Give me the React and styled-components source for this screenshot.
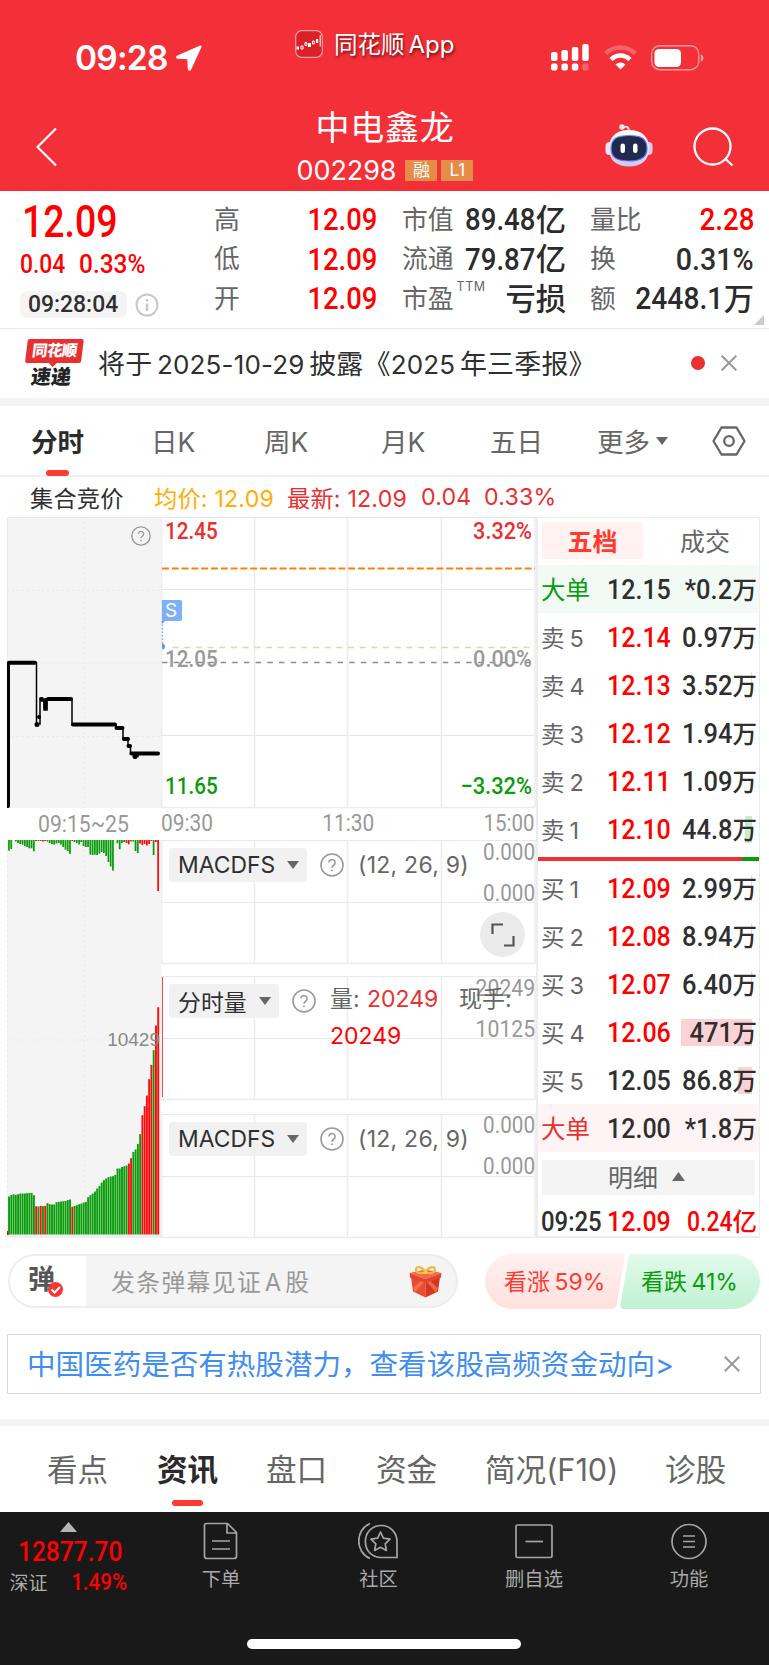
import React from 'react';
import styled, { createGlobalStyle } from 'styled-components';

const GlobalStyle = createGlobalStyle`
  * { box-sizing: border-box; }
  body {
    margin: 0;
    background: #fff;
    color: #2f2f2f;
    font-family: Inter, "Noto Sans CJK SC", sans-serif;
  }
  svg { display: block; flex: none; }
`;

const RED = '#ff0000';
const GREEN = '#0a9c0a';
const SOFT_RED = '#e93030';
const GREY = '#666';
const LINE = '#e9e9e9';

const Screen = styled.div`
  width: 769px;
  height: 1665px;
  display: flex;
  flex-direction: column;
  overflow: hidden;
  white-space: nowrap;
`;

/* Condensed, DIN-like figures */
const Num = styled.span`
  display: inline-block;
  font-family: Roboto, sans-serif;
  font-weight: ${p => p.$weight || 500};
  font-size: ${p => p.$size}px;
  line-height: 1;
  color: ${p => p.$color || 'inherit'};
  transform: scaleX(${p => p.$k || 0.86});
  transform-origin: ${p => p.$from || 'right'} center;
`;

/* ---------- header ---------- */
const Header = styled.header`
  height: 191px;
  background: #f33038;
  color: #fff;
  flex: none;
`;
const StatusBar = styled.div`
  height: 96px;
  display: grid;
  grid-template-columns: 295px 256px 1fr;
`;
const Clock = styled.div`
  display: flex;
  align-items: center;
  height: 115px;
  gap: 8px;
  padding-left: 75px;
  font-size: 33.5px;
  font-weight: 600;
  letter-spacing: -0.8px;
`;
const AppBadge = styled.div`
  display: flex;
  align-items: center;
  height: 88px;
  gap: 11px;
  font-size: 23.5px;
  text-shadow: 1px 2px 3px rgba(70, 0, 0, 0.75);
  div { padding-bottom: 2px; }
  span { margin-left: 4px; font-size: 24px; }
`;
const StatusIcons = styled.div`
  display: flex;
  align-items: center;
  height: 115px;
  gap: 14px;
`;
const TitleBar = styled.div`
  height: 95px;
  display: grid;
  grid-template-columns: 36px 249px 200px 120px 88px 1fr;
  align-items: start;
`;
const IconSlot = styled.div`
  padding-top: ${p => p.$top}px;
`;
const StockTitle = styled.div`
  display: flex;
  flex-direction: column;
  align-items: center;
`;
const StockName = styled.h1`
  margin: 8px 0 0;
  font-size: 34px;
  font-weight: 400;
  line-height: 48px;
  letter-spacing: 0.8px;
`;
const StockCode = styled.div`
  display: flex;
  align-items: center;
  height: 36px;
  font-size: 27px;
  letter-spacing: -0.1px;
  gap: 4px;
  > span:first-child { margin-right: 5px; }
`;
const Mark = styled.span`
  width: 32px;
  height: 21px;
  background: #e58d48;
  font-size: 17px;
  line-height: 21px;
  text-align: center;
  letter-spacing: 0;
`;

/* ---------- quote ---------- */
const Quote = styled.section`
  position: relative;
  height: 138px;
  flex: none;
  display: grid;
  grid-template-columns: 194px 188px 188px 163px;
  padding: 9px 0 0 20px;
  border-bottom: 1px solid ${LINE};
`;
const Corner = styled.svg`
  position: absolute;
  right: 5px;
  bottom: 3px;
`;
const Price = styled.div`
  display: flex;
  flex-direction: column;
`;
const PriceBig = styled.div`
  height: 41px;
  padding: 1px 0 0 2px;
`;
const PriceChange = styled.div`
  height: 38px;
  display: grid;
  grid-template-columns: 59px auto;
  align-items: center;
  padding-top: 7px;
`;
const PriceTime = styled.div`
  display: flex;
  align-items: center;
  gap: 8px;
  height: 27px;
  margin-top: 12px;
`;
const TimePill = styled.div`
  width: 107px;
  height: 27px;
  border-radius: 7px;
  background: #f4f4f4;
  padding: 1px 0 0 8px;
`;
const Stats = styled.div`
  width: ${p => p.$w || 164}px;
`;
const Stat = styled.div`
  height: 39.6px;
  display: flex;
  align-items: center;
  justify-content: space-between;
`;
const StatLabel = styled.span`
  color: ${GREY};
  font-size: 25.8px;
  line-height: 38px;
  sup {
    font-size: 12.5px;
    vertical-align: top;
    position: relative;
    top: -12px;
    left: 3px;
    letter-spacing: 0.5px;
  }
`;
const StatValue = styled.span`
  display: flex;
  align-items: center;
  color: #2b2b2b;
  font-size: 30.3px;
  font-weight: 500;
  line-height: 38px;
`;

/* ---------- news ---------- */
const News = styled.section`
  height: 69px;
  flex: none;
  display: flex;
  align-items: center;
  padding: 0 32px 2px 24px;
`;
const NewsLogo = styled.div`
  width: 58px;
  height: 47px;
  transform: skewX(-7deg);
  text-align: center;
  font-weight: 900;
`;
const NewsLogoTop = styled.div`
  position: relative;
  height: 24px;
  margin: 0 1px;
  border-radius: 2px;
  background: #e93030;
  color: #fff;
  font-size: 15.5px;
  line-height: 23px;
  letter-spacing: -0.7px;
  &::after {
    content: '';
    position: absolute;
    left: 24px;
    top: 24px;
    border: 4px solid transparent;
    border-top-color: #e93030;
    border-bottom-width: 0;
  }
`;
const NewsLogoBottom = styled.div`
  color: #222;
  font-size: 20px;
  line-height: 28px;
`;
const NewsText = styled.div`
  margin-left: 16px;
  flex: 1;
  font-size: 27px;
  letter-spacing: 0.15px;
  word-spacing: -3px;
`;
const Latin = styled.span`
  font-size: 26px;
`;
const Dot = styled.i`
  width: 14px;
  height: 14px;
  border-radius: 50%;
  background: #e93030;
  margin-right: 16px;
`;
const Gap = styled.div`
  height: ${p => p.$h}px;
  flex: none;
  background: #f3f3f3;
`;

/* ---------- period tabs ---------- */
const Periods = styled.nav`
  height: 71px;
  flex: none;
  display: grid;
  grid-template-columns: 120px 113px 117px 109px 107px 115px 1fr;
  padding-left: 31px;
  border-bottom: 2px solid #f0f0f0;
  font-size: 26.5px;
`;
const Period = styled.div`
  position: relative;
  display: flex;
  align-items: center;
  gap: 6px;
  font-weight: ${p => (p.$on ? 600 : 400)};
  color: ${p => (p.$on ? '#2b2b2b' : GREY)};
  &::after {
    content: '';
    display: ${p => (p.$on ? 'block' : 'none')};
    position: absolute;
    left: 15px;
    bottom: -1px;
    width: 23px;
    height: 6px;
    border-radius: 3px;
    background: #ff3b30;
  }
`;
const Summary = styled.div`
  height: 40px;
  flex: none;
  display: grid;
  grid-template-columns: 124px 133px 134px 63px auto;
  align-items: center;
  padding: 0 0 1px 30px;
  font-size: 23.2px;
`;
const SummaryItem = styled.span`
  color: ${p => p.$color};
  letter-spacing: 0.2px;
`;

/* ---------- board ---------- */
const Board = styled.section`
  height: 721px;
  flex: none;
  display: grid;
  grid-template-columns: 154px 375px 224px;
  padding-left: 7px;
`;
const Auction = styled.div`
  display: flex;
  flex-direction: column;
  position: relative;
`;
const AuctionLabel = styled.div`
  height: 32px;
  padding: 5px 0 0 31px;
  color: #999;
`;
const HelpSpot = styled.div`
  position: absolute;
  left: 124px;
  top: 9px;
`;
const AuctionVolume = styled.div`
  position: absolute;
  right: 1px;
  top: 513px;
  font: 19px/20px "Liberation Sans", sans-serif;
  color: #888;
`;
const Charts = styled.div`
  display: flex;
  flex-direction: column;
`;
const Plot = styled.div`
  position: relative;
  height: ${p => p.$h}px;
`;
const TimeAxis = styled.div`
  height: ${p => p.$h}px;
  display: flex;
  justify-content: space-between;
  padding: 3px 1px 0 0;
  color: #999;
`;
const Tag = styled.div`
  position: absolute;
  top: ${p => p.$top}px;
  ${p => (p.$left !== undefined ? `left: ${p.$left}px;` : `right: ${p.$right}px;`)}
  color: ${p => p.$color || '#999'};
  line-height: 1;
`;
const Flag = styled.div`
  position: absolute;
  left: 1px;
  top: 83px;
  width: 20px;
  height: 21px;
  border-radius: 0 2px 2px 0;
  background: #7db0f5;
  color: #fff;
  font-size: 19px;
  line-height: 22px;
  text-align: center;
  padding-right: 2px;
`;
const Indicator = styled.div`
  position: absolute;
  top: 8px;
  left: 8px;
  display: flex;
  align-items: flex-start;
`;
const Picker = styled.button`
  width: ${p => p.$w}px;
  height: 34px;
  border: 0;
  border-radius: 4px;
  background: rgba(240, 240, 240, 0.94);
  padding: 0 8px 1px 9px;
  display: flex;
  align-items: center;
  justify-content: space-between;
  font: 400 22.9px Inter, "Noto Sans CJK SC", sans-serif;
  color: #2f2f2f;
  margin-right: 13px;
`;
const Params = styled.div`
  margin-left: 14px;
  font-size: 23px;
  line-height: 34px;
  letter-spacing: 0.25px;
  color: ${GREY};
`;
const Readout = styled.div`
  display: grid;
  grid-template-columns: 37px 92px auto;
  margin: -3px 0 0 14px;
  font-size: 23px;
  line-height: 36.5px;
  color: ${GREY};
  b { font-weight: 400; color: ${SOFT_RED}; }
  em { font-style: normal; color: ${RED}; grid-column: 1 / -1; }
`;
const HelpWrap = styled.div`
  padding-top: 5px;
`;
const Expand = styled.div`
  position: absolute;
  right: 11px;
  top: 72px;
  width: 45px;
  height: 45px;
  border-radius: 50%;
  background: #ebebeb;
  display: flex;
  align-items: center;
  justify-content: center;
`;

/* ---------- order book ---------- */
const Book = styled.aside`
  height: 721px;
  border: solid #ededed;
  border-width: 1px 1px 2px 2px;
  display: flex;
  flex-direction: column;
`;
const BookTabs = styled.div`
  height: 47px;
  flex: none;
  display: grid;
  grid-template-columns: 101px 1fr;
  padding: 4px 0 6px 4px;
  font-size: 25px;
`;
const BookTab = styled.div`
  display: flex;
  align-items: center;
  justify-content: center;
  padding: 0 0 2px ${p => (p.$on ? 0 : 8)}px;
  height: 37px;
  border-radius: 4px;
  background: ${p => (p.$on ? '#fff2f1' : 'transparent')};
  color: ${p => (p.$on ? '#ff3b30' : GREY)};
  font-weight: ${p => (p.$on ? 700 : 400)};
`;
const Level = styled.div`
  position: relative;
  height: ${p => p.$h || 48}px;
  margin-top: ${p => p.$mt || 0}px;
  flex: none;
  display: grid;
  grid-template-columns: 66px 71px 1fr;
  align-items: center;
  padding: 1px 2px 0 3px;
  background: ${p => p.$bg || 'transparent'};
`;
const LevelName = styled.span`
  color: ${p => p.$color || GREY};
  font-size: ${p => (p.$big ? 24.5 : 23.5)}px;
  padding-bottom: 2px;
  word-spacing: -1.5px;
`;
const Amount = styled.span`
  position: relative;
  display: flex;
  align-items: center;
  justify-content: flex-end;
  color: ${p => p.$color || '#2f2f2f'};
  font-size: 24.5px;
  font-weight: 500;
  line-height: ${p => p.$lh || 34}px;
`;
const DepthBar = styled.i`
  position: absolute;
  right: 7px;
  top: 11px;
  width: ${p => p.$w}px;
  height: 27px;
  background: ${p => p.$color};
`;
const Ratio = styled.div`
  height: 11px;
  flex: none;
  padding-top: 4px;
  &::after {
    content: '';
    display: block;
    height: 4px;
    background: linear-gradient(90deg, #f03038 204px, ${GREEN} 204px);
  }
`;
const Details = styled.div`
  height: 35px;
  margin: 8px 4px 4px 4px;
  padding: 0 4px 3px 0;
  flex: none;
  background: #f4f4f4;
  display: flex;
  align-items: center;
  justify-content: center;
  gap: 14px;
  font-size: 25px;
  color: ${GREY};
`;

/* ---------- comments and votes ---------- */
const Social = styled.section`
  height: 55px;
  margin-top: 16px;
  flex: none;
  display: flex;
  padding-left: 8px;
`;
const Danmu = styled.div`
  width: 450px;
  height: 54px;
  border: 2px solid #ededed;
  border-radius: 27px;
  background: #f4f4f4;
  display: flex;
  align-items: center;
  overflow: hidden;
  margin-right: 27px;
  padding-right: 14px;
  color: #999;
  font-size: 23.8px;
  letter-spacing: 1.4px;
`;
const DanmuToggle = styled.div`
  position: relative;
  width: 76px;
  height: 50px;
  background: #fff;
  padding: 0 0 0 18px;
  font-size: 27px;
  font-weight: 700;
  line-height: 48px;
  color: #555;
  svg { position: absolute; left: 38px; top: 26px; }
`;
const DanmuText = styled.span`
  flex: 1;
  padding: 0 0 1px 25px;
  word-spacing: -5.5px;
`;
const VoteText = styled.span`
  position: relative;
  top: -2px;
  word-spacing: -2px;
`;
const Vote = styled.div`
  position: relative;
  width: 140px;
  height: 55px;
  margin-left: ${p => p.$ml || 0}px;
  display: flex;
  align-items: center;
  padding-left: ${p => p.$pl}px;
  color: ${p => p.$color};
  font-size: 23px;
  > svg { position: absolute; inset: 0; }
`;
const Promo = styled.section`
  height: 60px;
  margin: 25px 8px 25px 7px;
  border: 1.5px solid #d8d8d8;
  flex: none;
  display: flex;
  align-items: center;
  justify-content: space-between;
  padding: 0 20px 0 19px;
  font-size: 28.55px;
  color: #3f8ef0;
  span { padding-bottom: 4px; }
`;
const Sections = styled.nav`
  height: 86px;
  flex: none;
  display: grid;
  grid-template-columns: 110px 109px 110px 109px 180px auto;
  padding-left: 47px;
`;
const SectionTab = styled.div`
  position: relative;
  font-size: 30.6px;
  line-height: 88px;
  height: 86px;
  color: ${p => (p.$on ? '#2b2b2b' : GREY)};
  font-weight: ${p => (p.$on ? 600 : 400)};
  &::after {
    content: '';
    display: ${p => (p.$on ? 'block' : 'none')};
    position: absolute;
    left: 15px;
    bottom: 6px;
    width: 31px;
    height: 6px;
    border-radius: 3px;
    background: #ff3b30;
  }
`;

/* ---------- bottom bar ---------- */
const Bottom = styled.footer`
  height: 153px;
  flex: none;
  background: #191919;
  color: #aaa;
`;
const BottomRow = styled.div`
  height: 127px;
  display: grid;
  grid-template-columns: 142px 158px 157px 154px 156px;
`;
const Index = styled.div`
  display: flex;
  flex-direction: column;
  align-items: center;
  padding: 10px 0 0;
  width: 137px;
`;
const IndexValue = styled.div`
  width: 118px;
  height: 30px;
  margin-top: 6px;
  padding-left: 8px;
`;
const IndexLine = styled.div`
  display: flex;
  align-items: center;
  justify-content: space-between;
  width: 118px;
  height: 27px;
  font-size: 19px;
`;
const Action = styled.div`
  display: flex;
  flex-direction: column;
  align-items: center;
  padding-top: 10px;
  font-size: 19.3px;
  line-height: 28px;
  svg { margin-bottom: 5px; }
`;
const HomeBar = styled.div`
  width: 274px;
  height: 10px;
  border-radius: 5px;
  background: #fff;
  margin-left: 247px;
`;

const Help = ({ size = 24 }) => (
  <svg width={size} height={size} viewBox="0 0 24 24" fill="none" stroke="#999" strokeWidth="1.6">
    <circle cx="12" cy="12" r="11" />
    <path d="M8.9 9.6a3.1 3.1 0 1 1 4.8 2.6c-1.1.8-1.7 1.2-1.7 2.6" />
    <circle cx="12" cy="17.3" r=".6" fill="#999" strokeWidth=".8" />
  </svg>
);
const Tri = ({ w = 12, h = 8, up, color = '#666' }) => (
  <svg width={w} height={h}>
    <path d={up ? `M0 ${h}H${w}L${w / 2} 0Z` : `M0 0H${w}L${w / 2} ${h}Z`} fill={color} />
  </svg>
);
const Cross = () => (
  <svg width="16" height="16" stroke="#999" strokeWidth="2">
    <path d="M.7.7l14.6 14.6M15.3.7L.7 15.3" />
  </svg>
);

const G = 'g';
const R = 'r';
/* each bar is [height, colour] */
const V = (list, color) => list.map(h => [h, color]);
const matched = [
  ...V([38, 39.5, 40.3, 39.7, 40.3, 41, 41, 41, 41.3, 41.6, 41.6, 39.3], G),
  [28.3, R], [28, G], [28.6, R], [28.3, G], [28.6, R],
  ...V([31.3, 30.3, 30, 30, 32.3, 32.6, 33, 33.3, 33.6, 34.5, 35], G),
  [27.7, R],
  ...V([28.6, 29.3, 30.3, 31, 32, 32.6, 37.3, 39.3, 41, 43, 46, 48.6, 52, 54.3, 56, 57.3, 58, 58.3, 59.6, 66, 66, 67.6, 68.3, 69], G),
  [71, R], [76.3, R],
  ...V([82.6, 85, 90.6, 100.3], G),
  ...V([119.3, 128.3, 139, 155.3, 169.6], R),
  [184.3, G], [209, R], [227.3, R],
];
const unmatched = [
  ...V([10.6, 9, 0, 1.5, 3, 4, 4.6, 6, 7, 8.3, 8.3, 11.3], G),
  [1, R], [1, G], [1, R], [1.5, R], [1, R],
  ...V([1.5, 3, 4, 4.5, 3.5, 3, 4.5, 7, 9.6, 11, 14], G),
  [1, R],
  ...V([2, 3, 4.5, 2, 6, 7, 7, 14.6, 15, 14.6, 15, 13.6, 12, 13, 16, 22, 26.5, 30.6, 0, 3.3, 9.3, 3, 2], G),
  [3, R], [4.3, R],
  ...V([1.5, 1.5, 11, 13], G),
  ...V([3.5, 5, 4, 5.5, 4, 1], R),
  [15, G], [2, R], [51, R],
];
const barFill = c => (c === R ? '#ff0a0a' : '#0a9c0a');
const PITCH = 2.26;

const AuctionPrice = () => (
  <svg width="154" height="291" fill="none">
    <rect width="154" height="291" fill="#f4f4f4" />
    <path d="M.5 291V.5H154" stroke="#e9e9e9" />
    <path d="M77.5 0V291M0 73.5H154M0 219.5H154" stroke="#e9e9e9" strokeDasharray="2 3" />
    <path d="M0 146H154" stroke="#ededed" />
    <path d="M1.300 290V146H29.500V207H33V184H37V193H40V182H65V208H109V211H116V222H121V229H123.500V237H128V239.500H131V237H151" stroke="#000" strokeWidth="1.500" />
    <path d="M1 289V146.500M2 145.800H28M34 182H35M41 182H64M38.500 183V191M66 207.500H108M109.500 211H115.500M117 222H121M121.500 229H123M124.500 236.500H151" stroke="#000" strokeWidth="4" strokeLinecap="round" />
    <circle cx="30" cy="207.500" r="2.500" fill="#000" />
    <circle cx="32" cy="200" r="2" fill="#000" />
    <circle cx="128" cy="239.500" r="2.500" fill="#000" />
  </svg>
);

const AuctionBars = () => (
  <svg width="154" height="398">
    <rect width="154" height="398" fill="#f4f4f4" />
    <path d="M.5 0V398M77.500 0V398" stroke="#e9e9e9" strokeDasharray="2 3" />
    <path d="M0 200H154" stroke="#e9e9e9" strokeDasharray="2 3" />
    <path d="M0 396.500H154" stroke="#e9e9e9" strokeWidth="1.500" />
    <rect x="0" y="391" width="1.500" height="4" fill="#f00" />
    {unmatched.map(([h, c], i) => (
      <rect key={i} x={1.1 + i * PITCH} y="0" width="1.750" height={h} fill={barFill(c)} />
    ))}
    {matched.map(([h, c], i) => (
      <rect key={i} x={1.1 + i * PITCH} y={394.5 - h} width="1.900" height={h} fill={barFill(c)} />
    ))}
  </svg>
);

const PriceGrid = () => (
  <svg width="375" height="292" fill="none">
    <path d="M0 .5H374M0 72.500H374M0 218.500H374" stroke="#e7e7e7" />
    <path d="M.5 0V290M93.500 0V290M186.500 0V290M280.500 0V290M374 0V290M0 290.500H374" stroke="#ececec" strokeWidth="1.500" />
    <path d="M1 51.500H374" stroke="#ff8010" strokeWidth="2" strokeDasharray="7 2.800" />
    <path d="M11.500 130.500H370" stroke="#e8d2ae" strokeWidth="1.500" strokeDasharray="6 5.700" />
    <path d="M1 145.500H372" stroke="#8d8d8d" strokeWidth="1.300" strokeDasharray="5.500 6.200" />
    <path d="M1.500 104V128" stroke="#7db0f5" strokeWidth="1.500" strokeDasharray="1.500 2" />
    <path d="M1 104h3l-3 3zM1 126.500a3 3 0 0 1 0 6z" fill="#5a9bee" />
  </svg>
);

const SubGrid = () => (
  <svg width="375" height="125" fill="none">
    <path d="M0 .5H374M0 62.500H374" stroke="#e9e9e9" />
    <path d="M.5 0V124M93.500 0V124M186.500 0V124M280.500 0V124M374 0V124M0 123.500H374" stroke="#ececec" strokeWidth="1.500" />
  </svg>
);

const Robot = () => (
  <svg width="48" height="44" viewBox="0 0 48 44">
    <defs>
      <linearGradient id="shell" x1="0" y1="0" x2="0" y2="1">
        <stop offset="0" stopColor="#fff" />
        <stop offset=".6" stopColor="#e4e2fa" />
        <stop offset="1" stopColor="#c9c6ee" />
      </linearGradient>
      <linearGradient id="rim" x1="0" y1="0" x2="1" y2="1">
        <stop offset="0" stopColor="#4fb5ea" />
        <stop offset=".5" stopColor="#9a63ee" />
        <stop offset="1" stopColor="#3e7af0" />
      </linearGradient>
    </defs>
    <path d="M18 3.500c4-2 6-.5 6 4" fill="none" stroke="#f0e3ee" strokeWidth="2" />
    <circle cx="17" cy="3" r="2.700" fill="#efe6f5" />
    <rect x=".5" y="18" width="8" height="13" rx="4" fill="#e6e4f8" />
    <rect x="39.500" y="18" width="8" height="13" rx="4" fill="#d2d0f0" />
    <path d="M24 6c13 0 20 7 20 18 0 12-7 18.500-20 18.500S4 36 4 24C4 13 11 6 24 6z" fill="url(#shell)" />
    <path d="M24 11.500c12 0 18 3 18 13 0 9-6 12.500-18 12.500S6 33.500 6 24.500c0-10 6-13 18-13z" fill="#1f2a4e" stroke="url(#rim)" strokeWidth="1.200" />
    <rect x="15.500" y="19.500" width="4.500" height="9.500" rx="2.200" fill="#fff" />
    <rect x="28" y="19.500" width="4.500" height="9.500" rx="2.200" fill="#fff" />
  </svg>
);

const Gift = () => (
  <svg width="33" height="34" viewBox="0 0 33 34">
    <path d="M2 13l14.500 3v17.500L4 27.500z" fill="#ea4a2e" />
    <path d="M31 13l-14.500 3v17.500L29 27.500z" fill="#d8351f" />
    <path d="M.5 9l16-3.500L32.500 9l-16 6z" fill="#f0694a" />
    <path d="M.5 9l16 6v4L1.200 13.800zM32.500 9l-16 6v4l15.300-5.200z" fill="#e8442b" />
    <path d="M4 24l8-7 3 1.200L6 28.500zM29 24l-8-7-3 1.200 9 10.300z" fill="#f58a64" opacity=".6" />
    <path d="M16.500 8.500C12 10 7 9 7 5.500S13 1.500 16.500 8.500zM16.500 8.500C21 10 26 9 26 5.500S20 1.500 16.500 8.500z" fill="none" stroke="#f5b63c" strokeWidth="2.200" />
    <circle cx="16.500" cy="8" r="2" fill="#f9cd57" />
  </svg>
);

const levels = [
  { n: '大单', p: '12.15', a: '*0.2', c: '#2f2f2f', nc: GREEN, bg: '#f2faf6' },
  { n: '卖 5', p: '12.14', a: '0.97' },
  { n: '卖 4', p: '12.13', a: '3.52', bar: 1, bc: '#c9ecc9' },
  { n: '卖 3', p: '12.12', a: '1.94' },
  { n: '卖 2', p: '12.11', a: '1.09' },
  { n: '卖 1', p: '12.10', a: '44.8', bar: 7, bc: '#c9ecc9' },
  null,
  { n: '买 1', p: '12.09', a: '2.99', bar: 1, bc: '#fbd3d6' },
  { n: '买 2', p: '12.08', a: '8.94', bar: 1, bc: '#fbd3d6' },
  { n: '买 3', p: '12.07', a: '6.40', bar: 1, bc: '#fbd3d6' },
  { n: '买 4', p: '12.06', a: '471', bar: 71, bc: '#fbd3d6' },
  { n: '买 5', p: '12.05', a: '86.8', c: '#2f2f2f', bar: 14, bc: '#fbd3d6' },
  { n: '大单', p: '12.00', a: '*1.8', c: '#2f2f2f', nc: SOFT_RED, bg: '#fff4f5' },
];

const Macd = ({ expand }) => (
  <Plot $h={expand ? 136 : 125}>
    <SubGrid />
    <Tag $top={expand ? 1 : 0} $right={1}><Num $size={23.5} $weight={400} $k={0.88}>0.000</Num></Tag>
    <Tag $top={expand ? 42 : 41} $right={1}><Num $size={23.5} $weight={400} $k={0.88}>0.000</Num></Tag>
    <Indicator>
      <Picker $w={138}>MACDFS<Tri /></Picker>
      <HelpWrap><Help /></HelpWrap>
      <Params>(12, 26, 9)</Params>
    </Indicator>
    {expand && (
      <Expand>
        <svg width="24" height="24" fill="none" stroke="#555" strokeWidth="2.200">
          <path d="M1.500 11V1.500H12M13 22.500H22.500V13" />
        </svg>
      </Expand>
    )}
  </Plot>
);

const signal = [[9, 1], [11, 1], [14, 1], [17, 0.25]];

export default function App() {
  return (
    <Screen>
      <GlobalStyle />
      <Header>
        <StatusBar>
          <Clock>
            09:28
            <svg width="26" height="26" viewBox="0 0 26 26">
              <path d="M23.500.7L1.500 10.500c-2 1-1.600 3.200.5 3.300l9.300.4.500 9.600c.1 2.200 2.500 2.700 3.400.7L25.300 2.500C25.900 1 25 .1 23.500.7z" fill="#fff" />
            </svg>
          </Clock>
          <AppBadge>
            <svg width="28" height="28" viewBox="0 0 28 28" fill="none">
              <rect x=".7" y=".7" width="26.600" height="26.600" rx="6" fill="#dc2028" stroke="#f6a0a3" strokeWidth="1.200" />
              <path d="M1.500 16.500h2.500v3H1.500zM13 13h3v4h-3zM21 9h2.200v4H21z" fill="#fff" />
              <path d="M6 16h2v3H6zM10 12.500h1.800v3H10zM17.500 11h1.800v3h-1.800zM25.200 5v11.500" stroke="#fff" />
            </svg>
            <div>同花顺<span>App</span></div>
          </AppBadge>
          <StatusIcons>
            <svg width="39" height="27" fill="#fff">
              {signal.map(([h, o], i) => (
                <g key={i}>
                  <rect x={i * 10.400} y={17 - h} width="6.500" height={h} rx="2" />
                  <rect x={i * 10.400} y="19.500" width="6.500" height="7" rx="2" opacity={o} />
                </g>
              ))}
            </svg>
            <svg width="33" height="25" viewBox="0 0 33 25" fill="none" stroke="#fff" strokeWidth="4.500">
              <path d="M1.700 8.500c8-8 21.600-8 29.600 0" opacity=".25" />
              <path d="M7 14.500c5.500-5.300 13.500-5.300 19 0" />
              <path d="M16.500 24.500l-5-5c3-2.700 7-2.700 10 0z" fill="#fff" stroke="none" />
            </svg>
            <svg width="54" height="26" viewBox="0 0 54 26" fill="none">
              <rect x=".7" y=".7" width="47" height="24" rx="8" stroke="#fff" strokeWidth="1.400" opacity=".5" />
              <rect x="3.500" y="4" width="26.500" height="18" rx="4.500" fill="#fff" />
              <path d="M49.800 9v8c3.500-1.500 3.500-6.500 0-8z" fill="#fff" opacity=".5" />
            </svg>
          </StatusIcons>
        </StatusBar>
        <TitleBar>
          <span />
          <IconSlot $top={31}>
            <svg width="22" height="40" fill="none" stroke="#fff" strokeWidth="2.200">
              <path d="M20 1.500L1.500 20 20 38.500" />
            </svg>
          </IconSlot>
          <StockTitle>
            <StockName>中电鑫龙</StockName>
            <StockCode><span>002298</span><Mark>融</Mark><Mark>L1</Mark></StockCode>
          </StockTitle>
          <span />
          <IconSlot $top={28}><Robot /></IconSlot>
          <IconSlot $top={31}>
            <svg width="42" height="42" fill="none" stroke="#fff" strokeWidth="2.300">
              <circle cx="19.500" cy="19.500" r="18" />
              <path d="M32 31.500l7.500 7" />
            </svg>
          </IconSlot>
        </TitleBar>
      </Header>

      <Quote>
        <Price>
          <PriceBig><Num $size={43.5} $color={RED} $from="left">12.09</Num></PriceBig>
          <PriceChange>
            <Num $size={26} $color={RED} $from="left" $k={0.88}>0.04</Num>
            <Num $size={26} $color={RED} $from="left" $k={0.94}>0.33%</Num>
          </PriceChange>
          <PriceTime>
            <TimePill><Num $size={24.5} $from="left" $k={0.935}>09:28:04</Num></TimePill>
            <svg width="24" height="24" fill="none" stroke="#c8c8c8" strokeWidth="2">
              <circle cx="12" cy="12" r="10.500" />
              <path d="M12 10.500V18M12 6v2.500" strokeWidth="2.500" />
            </svg>
          </PriceTime>
        </Price>
        <Stats $w={163}>
          {['高', '低', '开'].map(l => (
            <Stat key={l}><StatLabel>{l}</StatLabel><Num $size={31.5} $k={0.87} $color={RED}>12.09</Num></Stat>
          ))}
        </Stats>
        <Stats>
          <Stat><StatLabel>市值</StatLabel><StatValue><Num $size={31.5} $k={0.875}>89.48</Num>亿</StatValue></Stat>
          <Stat><StatLabel>流通</StatLabel><StatValue><Num $size={31.5} $k={0.875}>79.87</Num>亿</StatValue></Stat>
          <Stat><StatLabel>市盈<sup>TTM</sup></StatLabel><StatValue>亏损</StatValue></Stat>
        </Stats>
        <Stats>
          <Stat><StatLabel>量比</StatLabel><Num $size={31.5} $k={0.88} $color={RED}>2.28</Num></Stat>
          <Stat><StatLabel>换</StatLabel><Num $size={31.5} $k={0.91}>0.31%</Num></Stat>
          <Stat><StatLabel>额</StatLabel><StatValue><Num $size={31.5} $k={0.895}>2448.1</Num>万</StatValue></Stat>
        </Stats>
        <Corner width="10" height="10"><path d="M10 0V10H0Z" fill="#ccc" /></Corner>
      </Quote>

      <News>
        <NewsLogo>
          <NewsLogoTop>同花顺</NewsLogoTop>
          <NewsLogoBottom>速递</NewsLogoBottom>
        </NewsLogo>
        <NewsText>将于 <Latin>2025-10-29</Latin> 披露《<Latin>2025</Latin> 年三季报》</NewsText>
        <Dot />
        <Cross />
      </News>
      <Gap $h={8} />

      <Periods>
        <Period $on>分时</Period>
        <Period>日K</Period>
        <Period>周K</Period>
        <Period>月K</Period>
        <Period>五日</Period>
        <Period>更多<Tri /></Period>
        <Period>
          <svg width="34" height="30" fill="none" stroke="#666" strokeWidth="2.300">
            <path d="M9.500 1.500h15L32.500 15l-8 13.500h-15L1.500 15z" strokeLinejoin="round" />
            <circle cx="17" cy="15" r="4.800" />
          </svg>
        </Period>
      </Periods>
      <Summary>
        <SummaryItem>集合竞价</SummaryItem>
        <SummaryItem $color="#ffae00">均价: 12.09</SummaryItem>
        <SummaryItem $color={SOFT_RED}>最新: 12.09</SummaryItem>
        <SummaryItem $color={SOFT_RED}>0.04</SummaryItem>
        <SummaryItem $color={SOFT_RED}>0.33%</SummaryItem>
      </Summary>

      <Board>
        <Auction>
          <AuctionPrice />
          <HelpSpot><Help size={20} /></HelpSpot>
          <AuctionLabel><Num $size={23.5} $weight={400} $k={0.9} $from="left">09:15~25</Num></AuctionLabel>
          <AuctionBars />
          <AuctionVolume>10429</AuctionVolume>
        </Auction>

        <Charts>
          <Plot $h={292}>
            <PriceGrid />
            <Flag>S</Flag>
            <Tag $top={3} $left={4} $color={SOFT_RED}><Num $size={23.5} $from="left" $k={0.88}>12.45</Num></Tag>
            <Tag $top={3} $right={4} $color={SOFT_RED}><Num $size={23.5} $k={0.92}>3.32%</Num></Tag>
            <Tag $top={131} $left={4}><Num $size={23.5} $from="left" $k={0.88}>12.05</Num></Tag>
            <Tag $top={131} $right={4}><Num $size={23.5} $k={0.92}>0.00%</Num></Tag>
            <Tag $top={258} $left={4} $color={GREEN}><Num $size={23.5} $from="left" $k={0.88}>11.65</Num></Tag>
            <Tag $top={258} $right={4} $color={GREEN}><Num $size={23.5} $k={0.93}>−3.32%</Num></Tag>
          </Plot>
          <TimeAxis $h={31}>
            <Num $size={23.5} $weight={400} $k={0.89} $from="left">09:30</Num>
            <Num $size={23.5} $weight={400} $k={0.89} $from="center">11:30</Num>
            <Num $size={23.5} $weight={400} $k={0.87}>15:00</Num>
          </TimeAxis>
          <Macd expand />
          <Plot $h={138}>
            <SubGrid />
            <Tag $top={1} $right={1}><Num $size={23.5} $weight={400} $k={0.9}>20249</Num></Tag>
            <Tag $top={42} $right={1}><Num $size={23.5} $weight={400} $k={0.9}>10125</Num></Tag>
            <Tag $top={1} $left={1}><svg width="1" height="120"><rect width="1" height="120" fill="#f05050" /></svg></Tag>
            <Indicator>
              <Picker $w={110}>分时量<Tri /></Picker>
              <HelpWrap><Help /></HelpWrap>
              <Readout>
                <span>量:</span><b>20249</b><span>现手:</span>
                <em>20249</em>
              </Readout>
            </Indicator>
          </Plot>
          <Macd />
        </Charts>

        <Book>
          <BookTabs>
            <BookTab $on>五档</BookTab>
            <BookTab>成交</BookTab>
          </BookTabs>
          {levels.map((l, i) => l ? (
            <Level key={i} $bg={l.bg}>
              {l.bar && <DepthBar $w={l.bar} $color={l.bc} />}
              <LevelName $color={l.nc} $big={!!l.nc}>{l.n}</LevelName>
              <Num $size={27.5} $k={0.91} $from="left" $color={l.c || RED}>{l.p}</Num>
              <Amount><Num $size={27.5} $k={0.925}>{l.a}</Num>万</Amount>
            </Level>
          ) : <Ratio key={i} />)}
          <Details>明细<Tri up w={13} h={9} /></Details>
          <Level $h={29} $mt={8}>
            <Num $size={27.5} $k={0.87} $from="left">09:25</Num>
            <Num $size={27.5} $k={0.91} $from="left" $color={RED}>12.09</Num>
            <Amount $color={RED} $lh={28}><Num $size={27} $k={0.85}>0.24</Num>亿</Amount>
          </Level>
        </Book>
      </Board>

      <Social>
        <Danmu>
          <DanmuToggle>
            弹
            <svg width="15" height="15" viewBox="0 0 15 15">
              <circle cx="7.500" cy="7.500" r="7.500" fill="#f5352f" />
              <path d="M3.500 7.500l3 3 5.500-5.500" fill="none" stroke="#fff" strokeWidth="2" />
            </svg>
          </DanmuToggle>
          <DanmuText>发条弹幕见证 A 股</DanmuText>
          <Gift />
        </Danmu>
        <Vote $pl={19} $color="#ff3b30">
          <svg width="140" height="55">
            <defs>
              <linearGradient id="up" x1="0" y1="0" x2="0" y2="1">
                <stop offset="0" stopColor="#fff0ef" /><stop offset="1" stopColor="#ffe1df" />
              </linearGradient>
            </defs>
            <path d="M27.500 0H136q4 0 3.500 4L132 50q-.8 5-6 5H27.500a27.500 27.500 0 0 1 0-55z" fill="url(#up)" />
          </svg>
          <VoteText>看涨 59%</VoteText>
        </Vote>
        <Vote $pl={21} $ml={-5} $color={GREEN}>
          <svg width="140" height="55">
            <defs>
              <linearGradient id="down" x1="0" y1="0" x2="0" y2="1">
                <stop offset="0" stopColor="#e2faeb" /><stop offset="1" stopColor="#c0f2d3" />
              </linearGradient>
            </defs>
            <path d="M13 0h99.500a27.500 27.500 0 0 1 0 55H4q-4 0-3.500-4L8 5q.8-5 5-5z" fill="url(#down)" />
          </svg>
          <VoteText>看跌 41%</VoteText>
        </Vote>
      </Social>

      <Promo>
        <span>中国医药是否有热股潜力，查看该股高频资金动向&gt;</span>
        <Cross />
      </Promo>
      <Gap $h={7} />

      <Sections>
        <SectionTab>看点</SectionTab>
        <SectionTab $on>资讯</SectionTab>
        <SectionTab>盘口</SectionTab>
        <SectionTab>资金</SectionTab>
        <SectionTab>简况(F10)</SectionTab>
        <SectionTab>诊股</SectionTab>
      </Sections>

      <Bottom>
        <BottomRow>
          <Index>
            <Tri up w={17} h={10} color="#b5b5b5" />
            <IndexValue>
              <Num $size={28.5} $k={0.86} $from="left" $color={RED}>12877.70</Num>
            </IndexValue>
            <IndexLine>
              深证
              <Num $size={24} $k={0.86} $color={RED}>1.49%</Num>
            </IndexLine>
          </Index>
          <Action>
            <svg width="36" height="38" fill="none" stroke="#a5a5a5" strokeWidth="1.700">
              <path d="M3.500 1.500h21l9 9V34q0 2.500-2.500 2.500H4q-2.500 0-2.500-2.500V3.500q0-2 2-2zM24 1.500v9.500h9.500M9 19h18M9 27h18" />
            </svg>
            下单
          </Action>
          <Action>
            <svg width="42" height="38" fill="none" stroke="#a5a5a5" strokeWidth="1.700">
              <path d="M12 1.500C-3 8-3 30 12 36.500M39 35.500H23.500C2 35.500 2 3.500 23.500 3.500 32 3.500 39 10.500 39 19.500z" />
              <path d="M22.500 10l2.900 6.200 6.600.9-4.800 4.700 1.200 6.700-5.900-3.200-5.900 3.200 1.200-6.700-4.800-4.700 6.600-.9z" strokeLinejoin="round" />
            </svg>
            社区
          </Action>
          <Action>
            <svg width="38" height="38" fill="none" stroke="#a5a5a5" strokeWidth="1.700">
              <rect x="1" y="3" width="36" height="32.500" rx="1.500" />
              <path d="M10.500 19.500h17.500" />
            </svg>
            删自选
          </Action>
          <Action>
            <svg width="36" height="38" fill="none" stroke="#a5a5a5" strokeWidth="1.700">
              <circle cx="18" cy="19.500" r="17" />
              <path d="M12 14h12M12 19.500h12M12 25h12" />
            </svg>
            功能
          </Action>
        </BottomRow>
        <HomeBar />
      </Bottom>
    </Screen>
  );
}
